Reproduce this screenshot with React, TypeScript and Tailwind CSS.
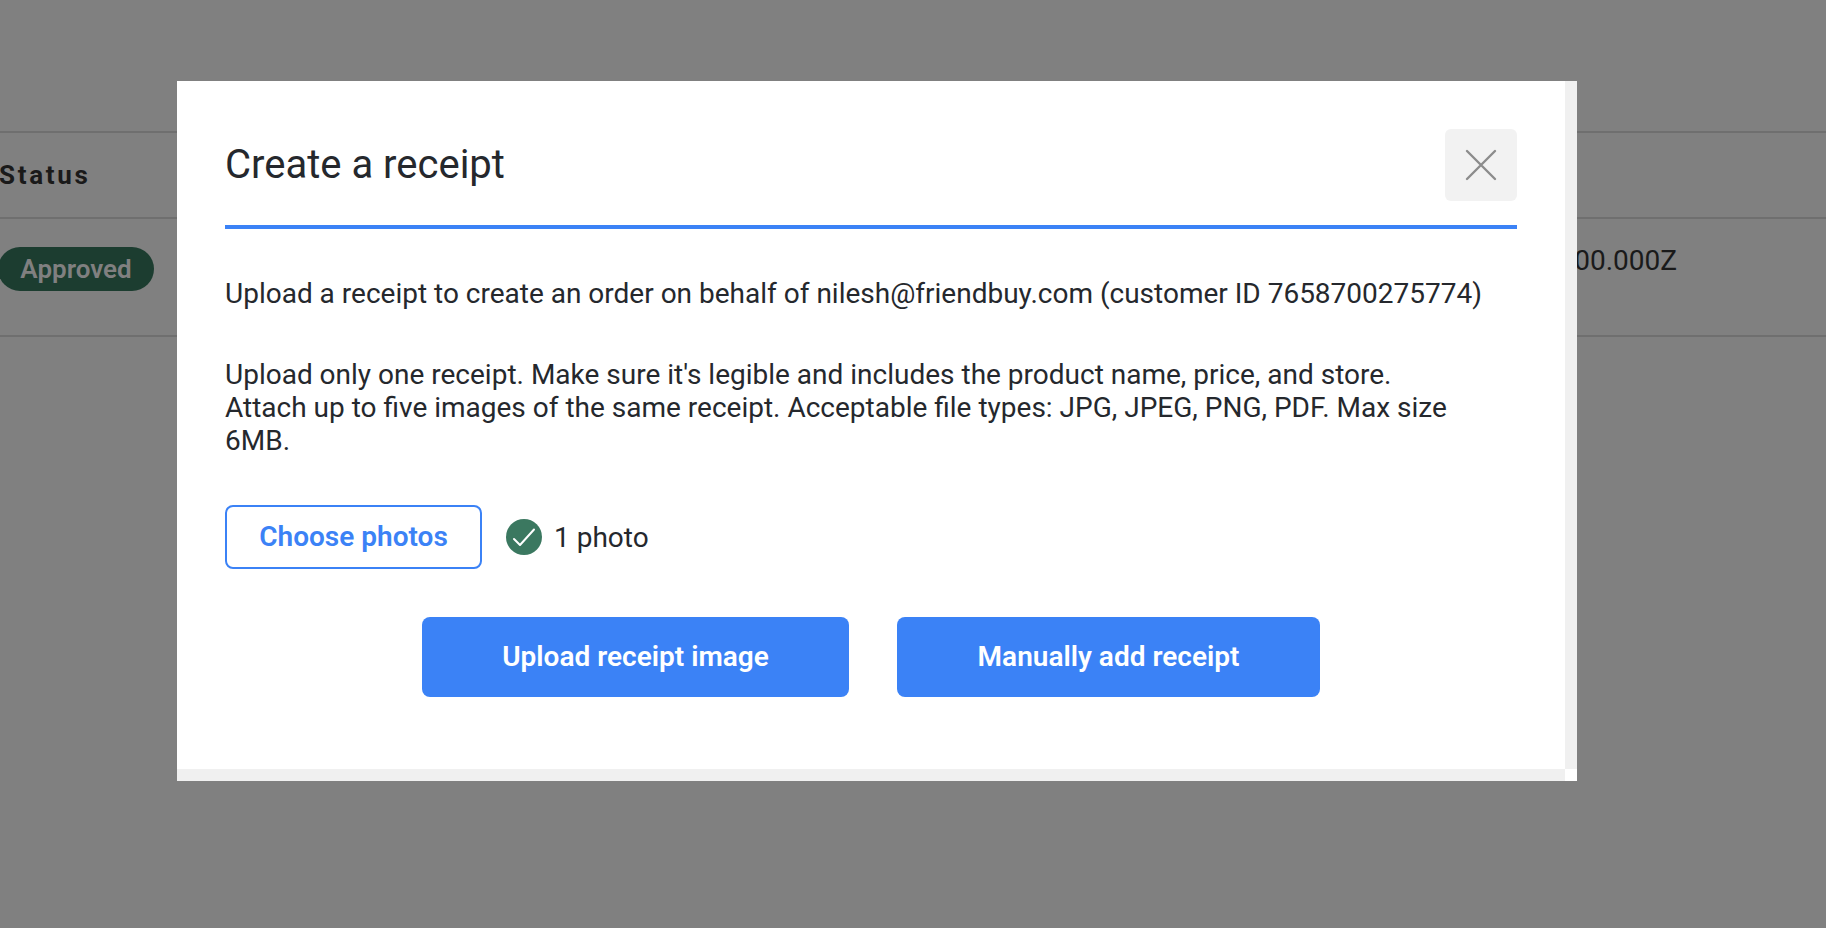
import React from "react";

const CheckBadge = () => (
  <svg width="36" height="36" viewBox="0 0 36 36" fill="none" className="shrink-0 ml-6">
    <circle cx="18" cy="18" r="18" fill="#3b7860" />
    <path d="M8 20L14 26L28 10.5" stroke="#fff" strokeWidth="2" strokeLinecap="round" strokeLinejoin="round" />
  </svg>
);

const CloseIcon = () => (
  <svg width="32" height="32" viewBox="0 0 32 32" fill="none">
    <path d="M2 2L30 30M30 2L2 30" stroke="#8c8c8c" strokeWidth="2.4" strokeLinecap="round" />
  </svg>
);

const BackgroundTable = () => (
  <div className="pt-[131px] text-[#1a1a1a]">
    <div className="h-[88px] border-y-2 border-[#6f6f6f] flex items-center">
      <span className="-ml-px text-[26px] font-bold tracking-[2.7px]">Status</span>
    </div>
    <div className="h-[118px] border-b-2 border-[#6f6f6f] flex items-start justify-between">
      <span className="-ml-[2px] mt-[28px] h-11 w-[156px] rounded-full bg-[#1c3d30] text-[#808080] text-[26px] font-semibold flex items-center justify-center">
        Approved
      </span>
      <span className="mr-[149px] mt-[21px] text-[28px]">00.000Z</span>
    </div>
  </div>
);

export default function App() {
  return (
    <div className="relative h-screen overflow-hidden bg-[#808080] font-['Roboto',sans-serif]">
      <BackgroundTable />

      <div className="absolute left-[177px] top-[81px] w-[1400px] h-[700px] bg-white flex flex-col">
        <div className="flex-1 flex min-h-0">
          <div className="flex-1 px-12 pt-12 text-[#25282d]">
            <div className="flex items-center justify-between pb-6 border-b-4 border-[#3b82f6]">
              <h2 className="text-[40px] leading-none">Create a receipt</h2>
              <button className="w-[72px] h-[72px] rounded-md bg-[#f2f2f2] flex items-center justify-center">
                <CloseIcon />
              </button>
            </div>

            <p className="mt-12 text-[28px] leading-[33px]">
              Upload a receipt to create an order on behalf of nilesh@friendbuy.com (customer ID 7658700275774)
            </p>
            <p className="mt-12 text-[28px] leading-[33px]">
              Upload only one receipt. Make sure it's legible and includes the product name, price, and store.
              <br />
              Attach up to five images of the same receipt. Acceptable file types: JPG, JPEG, PNG, PDF. Max size 6MB.
            </p>

            <div className="mt-12 flex items-center">
              <button className="w-[257px] h-16 rounded-lg border-2 border-[#3b82f6] text-[#3b82f6] text-[28px] font-semibold">
                Choose photos
              </button>
              <CheckBadge />
              <span className="ml-3 mt-[2px] text-[28px]">1 photo</span>
            </div>

            <div className="mt-12 flex justify-center gap-12">
              <button className="w-[427px] h-20 rounded-lg bg-[#3b82f6] text-white text-[28px] font-semibold">
                Upload receipt image
              </button>
              <button className="w-[423px] h-20 rounded-lg bg-[#3b82f6] text-white text-[28px] font-semibold">
                Manually add receipt
              </button>
            </div>
          </div>
          <div className="w-3 bg-[#f0f0f0]" />
        </div>
        <div className="h-3 flex">
          <div className="flex-1 bg-[#f0f0f0]" />
          <div className="w-3 bg-white" />
        </div>
      </div>
    </div>
  );
}
